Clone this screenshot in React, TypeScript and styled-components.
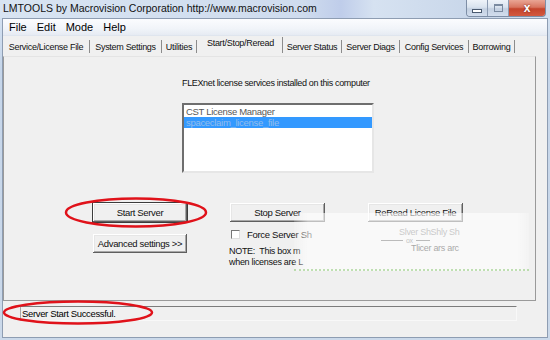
import styled, { createGlobalStyle } from 'styled-components'

const ui = `"Liberation Sans", Arial, sans-serif`

const GlobalStyle = createGlobalStyle`
  html, body {
    margin: 0;
    padding: 0;
    width: 550px;
    height: 340px;
    overflow: hidden;
    background: #c9d7e8;
  }
`

const tabs = [
  { label: 'Service/License File', w: 87 },
  { label: 'System Settings', w: 72 },
  { label: 'Utilities', w: 35 },
  { label: 'Start/Stop/Reread', w: 86, active: true },
  { label: 'Server Status', w: 59 },
  { label: 'Server Diags', w: 58 },
  { label: 'Config Services', w: 69 },
  { label: 'Borrowing', w: 46 },
]

function App() {
  return (
    <>
      <GlobalStyle />
      <Window>
        <TitleBar>
          <Title>LMTOOLS by Macrovision Corporation http://www.macrovision.com</Title>
          <Controls>
            <CtrlButton>
              <MinGlyph />
            </CtrlButton>
            <CtrlButton>
              <MaxGlyph />
            </CtrlButton>
            <CloseButton>x</CloseButton>
          </Controls>
        </TitleBar>
        <Client>
          <MenuBar>
            <MenuItem>File</MenuItem>
            <MenuItem>Edit</MenuItem>
            <MenuItem>Mode</MenuItem>
            <MenuItem>Help</MenuItem>
          </MenuBar>
          <TabStrip>
            {tabs.map((t) => (
              <Tab key={t.label} $w={t.w} $active={!!t.active}>
                {t.label}
              </Tab>
            ))}
          </TabStrip>
          <TabPage>
            <ListColumn>
              <Heading>FLEXnet license services installed on this computer</Heading>
              <ListBox>
                <ListItem>CST License Manager</ListItem>
                <ListItem $selected>spaceclaim_license_file</ListItem>
              </ListBox>
            </ListColumn>
            <ButtonGrid>
              <Column>
                <Button $default>Start Server</Button>
                <Button $top={10}>Advanced settings &gt;&gt;</Button>
              </Column>
              <Column>
                <Button>Stop Server</Button>
                <CheckRow>
                  <CheckBox />
                  <span>Force Server Sh</span>
                </CheckRow>
                <Note>
                  NOTE:&nbsp; This box m
                  <br />
                  when licenses are L
                </Note>
              </Column>
              <Column>
                <Button>ReRead License File</Button>
                <Garbled>
                  <GarbledLine $indent={32}>Slver ShShly Sh</GarbledLine>
                  <DashRow>
                    <Dash $w={22} />
                    <OxText>ox</OxText>
                    <Dash $w={14} />
                  </DashRow>
                  <GarbledLine $indent={44} $dark>Tlicer ars arc</GarbledLine>
                </Garbled>
              </Column>
            </ButtonGrid>
            <Watermark />
          </TabPage>
          <StatusArea>
            <StatusField>Server Start Successful.</StatusField>
          </StatusArea>
        </Client>
        <Annotations width="550" height="340" viewBox="0 0 550 340">
          <ellipse cx="136" cy="212.5" rx="70" ry="14" fill="none" stroke="#e0121a" strokeWidth="2.5" />
          <ellipse cx="78" cy="312.5" rx="74" ry="11" fill="none" stroke="#e0121a" strokeWidth="2.5" />
        </Annotations>
      </Window>
    </>
  )
}

const Window = styled.div`
  position: relative;
  width: 550px;
  height: 340px;
  box-sizing: border-box;
  display: flex;
  flex-direction: column;
  background: linear-gradient(180deg, #d9e5f3 0%, #c6d6ea 20%, #cbd9ea 100%);
`
const TitleBar = styled.div`
  height: 18px;
  display: flex;
  align-items: flex-start;
  padding-left: 3px;
  background: linear-gradient(90deg, #d8e4f2 0%, #cfdcee 55%, #bfcdea 62%, #d6e2f1 68%, #c9d7ea 85%, #d3dfee 100%);
`
const Title = styled.div`
  font-family: ${ui};
  font-size: 10.5px;
  line-height: 17px;
  color: #111;
  white-space: nowrap;
`
const Controls = styled.div`
  margin-left: auto;
  margin-right: 4px;
  display: flex;
  height: 16px;
  border: 1px solid #7d8ea6;
  border-top: none;
  border-radius: 0 0 4px 4px;
  overflow: hidden;
`
const CtrlButton = styled.div`
  width: 20px;
  height: 16px;
  display: flex;
  align-items: center;
  justify-content: center;
  border-right: 1px solid #8b9bb2;
  background: linear-gradient(180deg, #eef3f9 0%, #d9e3ef 45%, #c3d0e1 55%, #d2dded 100%);
`
const MinGlyph = styled.div`
  width: 8px;
  height: 2px;
  margin-top: 5px;
  background: #fff;
  border: 1px solid #4a5a70;
`
const MaxGlyph = styled.div`
  width: 7px;
  height: 5px;
  border: 1px solid #7a8aa0;
  border-top-width: 2px;
  background: transparent;
`
const CloseButton = styled.div`
  width: 36px;
  height: 16px;
  display: flex;
  align-items: center;
  justify-content: center;
  font-family: ${ui};
  font-weight: 700;
  font-size: 12px;
  line-height: 14px;
  color: #fff;
  text-shadow: 0 0 2px #6a1a10;
  background: linear-gradient(180deg, #e9a594 0%, #d87560 45%, #c5442c 55%, #d35a40 100%);
`
const Client = styled.div`
  flex: 1;
  margin: 0 2px 2px 2px;
  border: 1px solid #8e9db2;
  background: #f0f0f0;
  display: flex;
  flex-direction: column;
`
const MenuBar = styled.div`
  height: 17px;
  display: flex;
  align-items: center;
  padding-left: 1px;
  background: linear-gradient(180deg, #fbfcfe 0%, #f1f4f9 60%, #e6ebf3 100%);
  border-bottom: 1px solid #dfe5ee;
  box-sizing: border-box;
`
const MenuItem = styled.span`
  font-family: ${ui};
  font-size: 11px;
  color: #000;
  padding: 0 5px;
`
const TabStrip = styled.div`
  height: 20px;
  display: flex;
`
const Tab = styled.div<{ $w: number; $active: boolean }>`
  width: ${(p) => p.$w}px;
  height: ${(p) => (p.$active ? 16 : 13)}px;
  margin-top: ${(p) => (p.$active ? 1 : 4)}px;
  padding-left: ${(p) => (p.$active ? 2 : 0)}px;
  box-sizing: border-box;
  display: flex;
  align-items: ${(p) => (p.$active ? 'flex-start' : 'center')};
  justify-content: center;
  border-right: 1px solid #8c8c8c;
  font-family: ${ui};
  font-size: 9px;
  line-height: 12px;
  letter-spacing: -0.3px;
  color: #111;
  white-space: nowrap;
`
const TabPage = styled.div`
  position: relative;
  flex: 1;
  margin-right: 11px;
  border: 1px solid #9a9a9a;
  border-top-color: #e4e4e4;
  display: flex;
  flex-direction: column;
`
const ListColumn = styled.div`
  margin-left: 178px;
  width: 192px;
  display: flex;
  flex-direction: column;
`
const Heading = styled.div`
  margin-top: 21px;
  font-family: ${ui};
  font-size: 9px;
  letter-spacing: -0.35px;
  line-height: 11px;
  color: #111;
  white-space: nowrap;
`
const ListBox = styled.div`
  margin-top: 14px;
  height: 70px;
  box-sizing: border-box;
  background: #fff;
  border: 2px solid;
  border-color: #6e6e6e #e6e6e6 #e6e6e6 #6e6e6e;
  padding-top: 1px;
`
const ListItem = styled.div<{ $selected?: boolean }>`
  height: 11px;
  line-height: 11px;
  padding-left: 2px;
  font-family: ${ui};
  font-size: 9.5px;
  letter-spacing: -0.3px;
  color: ${(p) => (p.$selected ? '#93bdec' : '#585858')};
  background: ${(p) => (p.$selected ? '#3399ff' : 'transparent')};
`
const ButtonGrid = styled.div`
  margin-top: 29px;
  margin-left: 88px;
  display: grid;
  grid-template-columns: 96px 97px 97px;
  column-gap: 41px;
  align-items: start;
`
const Column = styled.div`
  display: flex;
  flex-direction: column;
`
const Button = styled.div<{ $default?: boolean; $top?: number }>`
  height: 21px;
  margin-top: ${(p) => p.$top ?? 0}px;
  box-sizing: border-box;
  display: flex;
  align-items: center;
  justify-content: center;
  background: #f0f0f0;
  font-family: ${ui};
  font-size: 9.5px;
  letter-spacing: -0.35px;
  color: #111;
  white-space: nowrap;
  border: 1px solid ${(p) => (p.$default ? '#3c3c3c' : 'transparent')};
  box-shadow: inset -1px -1px #5f5f5f, inset 1px 1px #ffffff, inset -2px -2px #a8a8a8, inset 2px 2px #e6e6e6;
`
const CheckRow = styled.div`
  margin-top: 6px;
  height: 10px;
  display: flex;
  align-items: center;
  gap: 7px;
  padding-left: 2px;
  font-family: ${ui};
  font-size: 9.5px;
  letter-spacing: -0.3px;
  color: #111;
  white-space: nowrap;
`
const CheckBox = styled.div`
  width: 9px;
  height: 9px;
  box-sizing: border-box;
  background: #fff;
  border: 1px solid;
  border-color: #777 #dedede #dedede #777;
`
const Note = styled.div`
  margin-top: 7px;
  font-family: ${ui};
  font-size: 9px;
  letter-spacing: -0.3px;
  line-height: 11px;
  color: #111;
  white-space: nowrap;
`
const Garbled = styled.div`
  margin-top: 5px;
  display: flex;
  flex-direction: column;
  font-family: ${ui};
  font-size: 9px;
  letter-spacing: -0.3px;
  white-space: nowrap;
`
const GarbledLine = styled.div<{ $indent: number; $dark?: boolean }>`
  padding-left: ${(p) => p.$indent}px;
  line-height: 9px;
  color: ${(p) => (p.$dark ? '#222' : '#777')};
`
const DashRow = styled.div`
  height: 7px;
  display: flex;
  align-items: center;
  gap: 3px;
  padding-left: 14px;
`
const Dash = styled.div<{ $w: number }>`
  width: ${(p) => p.$w}px;
  height: 1px;
  background: #555;
`
const OxText = styled.span`
  font-size: 7px;
  line-height: 7px;
  color: #666;
`
const Watermark = styled.div`
  position: absolute;
  left: 290px;
  top: 156px;
  width: 235px;
  height: 56px;
  background: linear-gradient(90deg, rgba(255, 255, 255, 0.15) 0px, rgba(255, 255, 255, 0.6) 14px, rgba(255, 255, 255, 0.6) 95%, rgba(255, 255, 255, 0.2) 100%);
  border-bottom: 2px dotted rgba(120, 190, 90, 0.45);
`
const StatusArea = styled.div`
  height: 36px;
  padding-top: 5px;
  padding-left: 17px;
  box-sizing: border-box;
`
const StatusField = styled.div`
  width: 497px;
  height: 15px;
  box-sizing: border-box;
  border: 1px solid;
  border-color: #7c7c7c #f8f8f8 #f8f8f8 #a8a8a8;
  padding-left: 1px;
  font-family: ${ui};
  font-size: 9.5px;
  letter-spacing: -0.35px;
  line-height: 13px;
  color: #000;
  white-space: nowrap;
`
const Annotations = styled.svg`
  position: absolute;
  left: 0;
  top: 0;
  pointer-events: none;
`

export default App
